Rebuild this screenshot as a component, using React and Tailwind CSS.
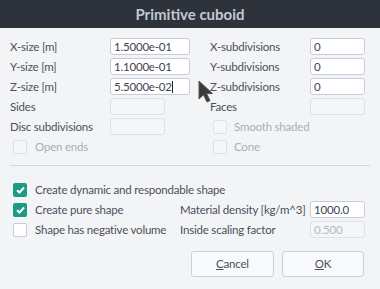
import React from "react";

const label = "text-[#4b505a] whitespace-nowrap";
const dim = "text-[#a9aeb6] whitespace-nowrap";

function Field({ value, width = "w-[80px]", disabled, caret }) {
  return (
    <div
      className={`${width} h-[17px] rounded-[3px] border flex items-center pl-[3px] ${
        disabled ? "bg-[#f5f6f8] border-[#dde1e8] text-[#b4b9c1]" : "bg-white border-[#c6ccdc] text-[#3f444e]"
      }`}
    >
      {value}
      {caret && <span className="w-px h-[12px] bg-[#222]" />}
    </div>
  );
}

function Check({ checked, disabled }) {
  if (checked) {
    return (
      <div className="w-[14px] h-[14px] rounded-[2px] bg-[#1c9a83] flex items-center justify-center">
        <svg width="9" height="8" viewBox="0 0 9 8">
          <path d="M1 4.2 L3.5 6.5 L8 1.5" fill="none" stroke="white" strokeWidth="2" />
        </svg>
      </div>
    );
  }
  return (
    <div
      className={`w-[14px] h-[14px] rounded-[2px] border ${
        disabled ? "bg-[#f5f6f8] border-[#dfe2e8]" : "bg-white border-[#c6ccdc]"
      }`}
    />
  );
}

function Row({ children }) {
  return <div className="flex items-center h-[17px]">{children}</div>;
}

export default function App() {
  return (
    <div
      className="relative w-[380px] h-[289px] bg-[#f3f4f6] text-[11.5px] tracking-[-0.2px] overflow-hidden"
      style={{ fontFamily: "Lato, 'Noto Sans', sans-serif" }}
    >
      <div className="h-[28px] bg-[#2e323b] flex items-center justify-center text-[#c3c9d4] font-bold text-[15px] tracking-normal">
        Primitive cuboid
      </div>

      <div className="pt-[10px] pl-[10px] flex flex-col gap-[3px]">
        <Row>
          <span className={`w-[100px] ${label}`}>X-size [m]</span>
          <Field value="1.5000e-01" />
          <span className={`w-[100px] ml-[20px] ${label}`}>X-subdivisions</span>
          <Field value="0" width="w-[55px]" />
        </Row>
        <Row>
          <span className={`w-[100px] ${label}`}>Y-size [m]</span>
          <Field value="1.1000e-01" />
          <span className={`w-[100px] ml-[20px] ${label}`}>Y-subdivisions</span>
          <Field value="0" width="w-[55px]" />
        </Row>
        <Row>
          <span className={`w-[100px] ${label}`}>Z-size [m]</span>
          <Field value="5.5000e-02" caret />
          <span className={`w-[100px] ml-[20px] ${label}`}>Z-subdivisions</span>
          <Field value="0" width="w-[55px]" />
        </Row>
        <Row>
          <span className={`w-[100px] ${label}`}>Sides</span>
          <Field value="" width="w-[55px]" disabled />
          <span className={`w-[100px] ml-[45px] ${label}`}>Faces</span>
          <Field value="" width="w-[55px]" disabled />
        </Row>
        <Row>
          <span className={`w-[100px] ${label}`}>Disc subdivisions</span>
          <Field value="" width="w-[55px]" disabled />
          <div className="ml-[48px] flex items-center gap-[7px]">
            <Check disabled />
            <span className={dim}>Smooth shaded</span>
          </div>
        </Row>
        <Row>
          <div className="ml-[3px] w-[200px] flex items-center gap-[8px]">
            <Check disabled />
            <span className={dim}>Open ends</span>
          </div>
          <div className="flex items-center gap-[7px]">
            <Check disabled />
            <span className={dim}>Cone</span>
          </div>
        </Row>
      </div>

      <div className="mx-[10px] mt-[10px] h-px bg-[#d3d6dc]" />

      <div className="pt-[15px] pl-[13px] flex flex-col gap-[3px]">
        <Row>
          <Check checked />
          <span className={`ml-[8px] ${label}`}>Create dynamic and respondable shape</span>
        </Row>
        <Row>
          <div className="w-[167px] flex items-center gap-[8px]">
            <Check checked />
            <span className={label}>Create pure shape</span>
          </div>
          <span className={`w-[130px] ${label}`}>Material density [kg/m^3]</span>
          <Field value="1000.0" width="w-[55px]" />
        </Row>
        <Row>
          <div className="w-[167px] flex items-center gap-[8px]">
            <Check />
            <span className={label}>Shape has negative volume</span>
          </div>
          <span className={`w-[130px] ${label}`}>Inside scaling factor</span>
          <Field value="0.500" width="w-[55px]" disabled />
        </Row>
      </div>

      <div className="mt-[13px] pr-[16px] flex justify-end gap-[8px]">
        <button className="w-[83px] h-[26px] rounded-[3px] border border-[#c9cfdf] bg-[#f8f9fb] text-[#4b505a]">
          <span className="underline">C</span>ancel
        </button>
        <button className="w-[82px] h-[26px] rounded-[3px] border border-[#c9cfdf] bg-[#f8f9fb] text-[#4b505a]">
          <span className="underline">O</span>K
        </button>
      </div>

      <svg className="absolute left-[198px] top-[80px]" width="18" height="24" viewBox="0 0 18 24">
        <path
          d="M1 1 L1 19 L5.5 14.8 L9 22 L12 20.6 L8.6 13.6 L14.5 13.6 Z"
          fill="#3a3a3a"
          stroke="#555"
          strokeWidth="1"
          strokeLinejoin="round"
        />
      </svg>
    </div>
  );
}
